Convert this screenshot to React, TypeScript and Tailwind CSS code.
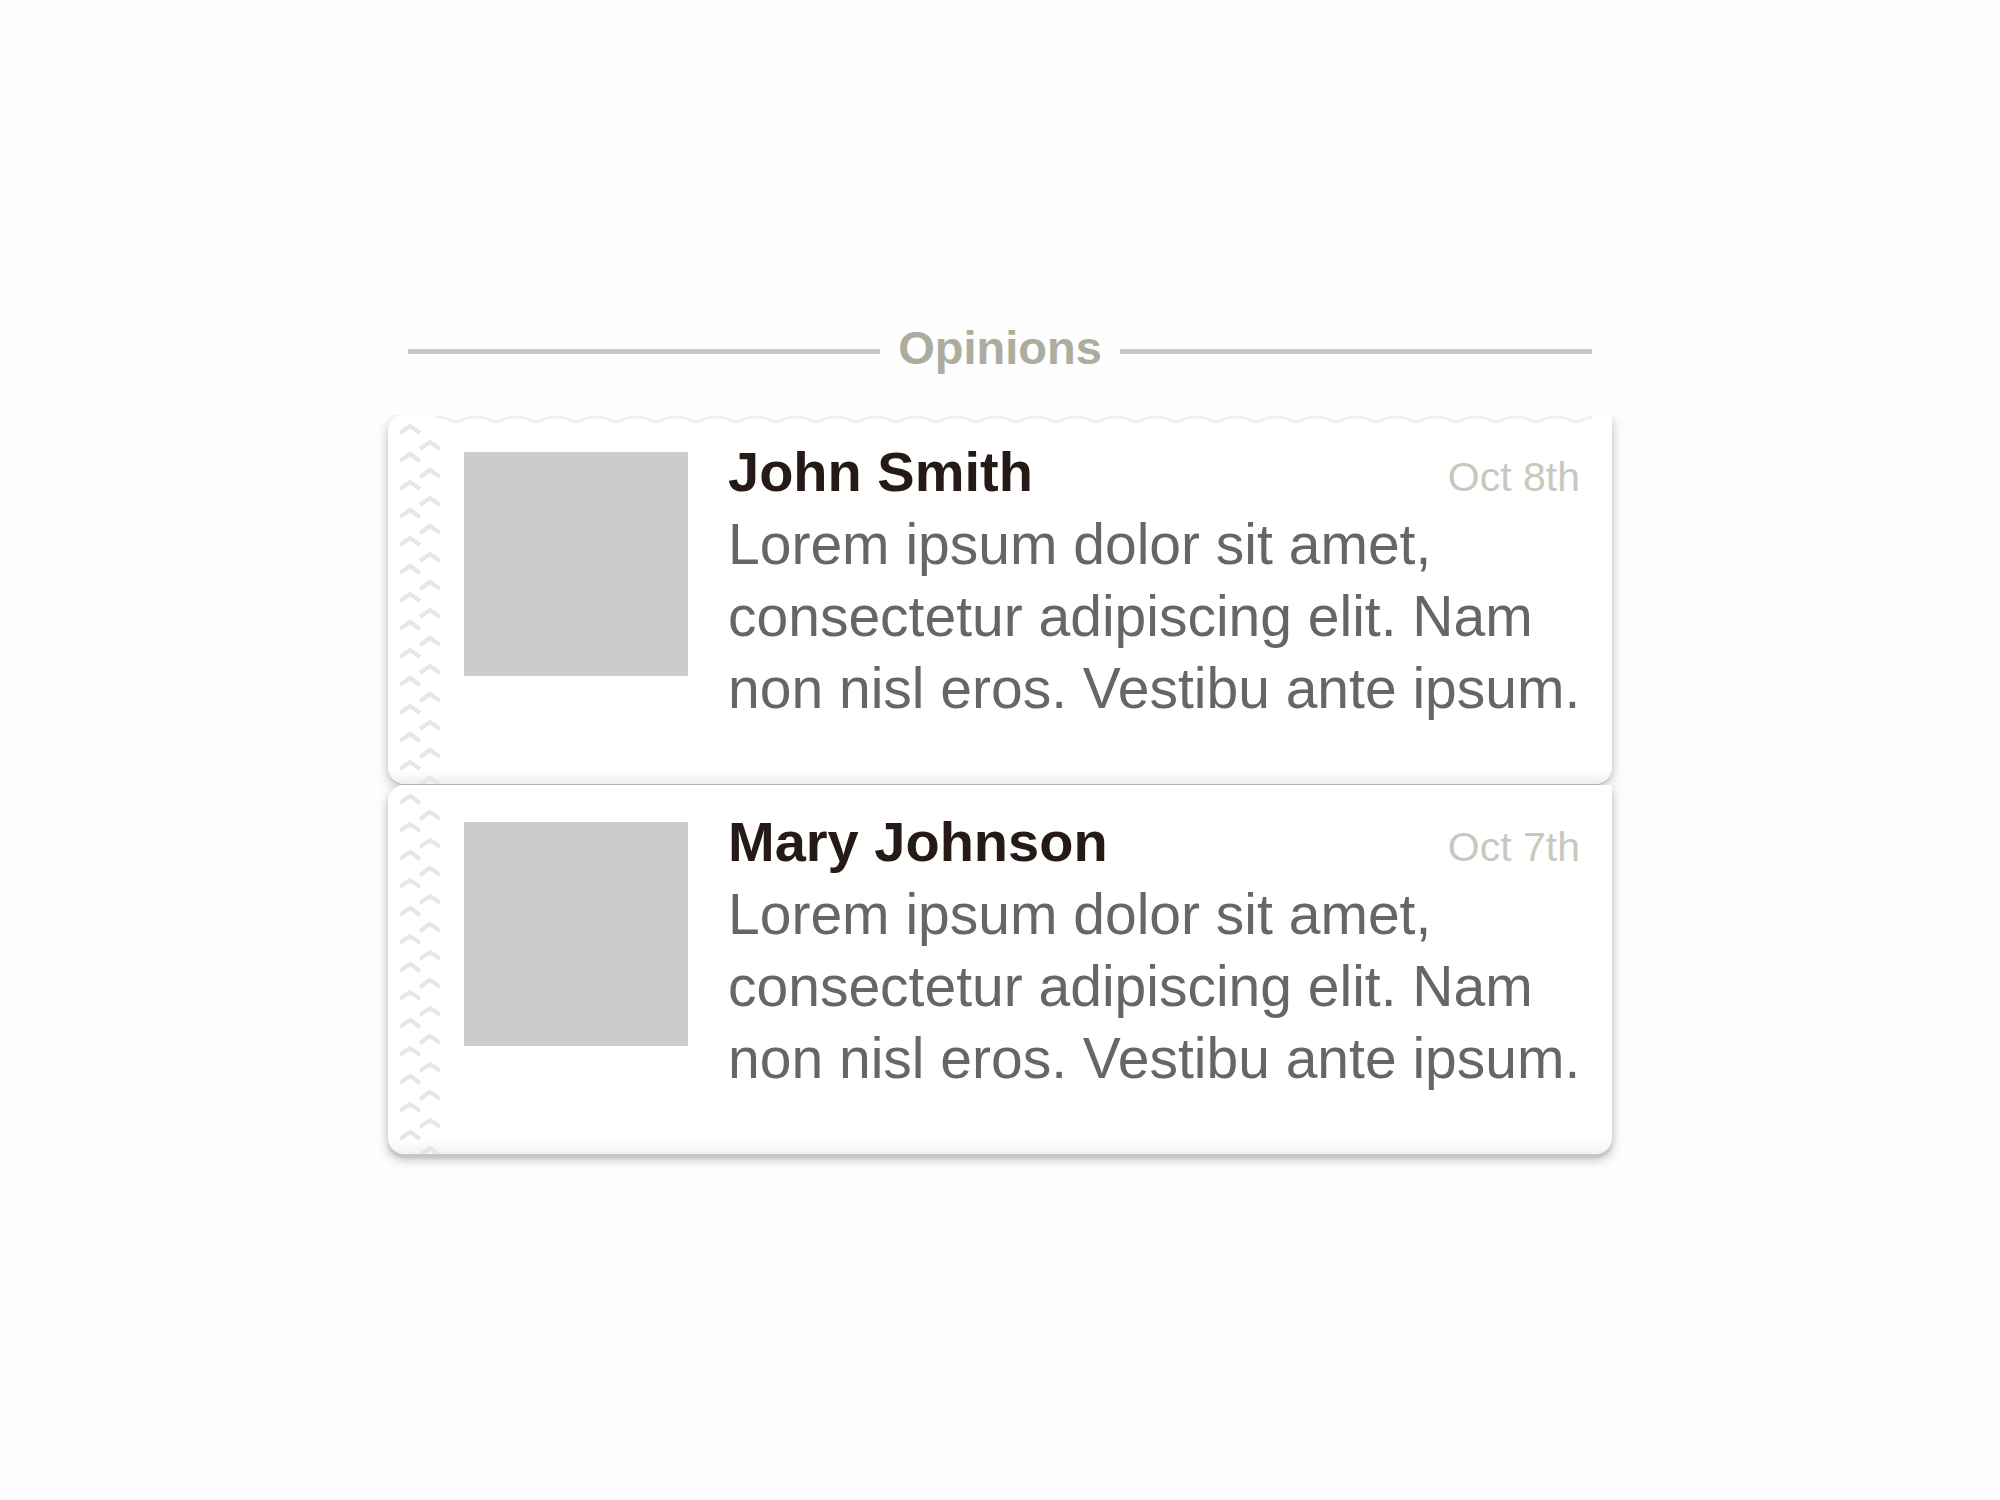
const CHEVRONS = Array.from({ length: 13 }, (_, i) => i * 28);

const WAVE = "M0 2" + Array.from({ length: 29 }, () => " q8 0 14 3 q6 4 12 0 q6 -3 14 -3").join("");

function Stitching() {
  return (
    <svg aria-hidden="true" className="h-full w-10 shrink-0" fill="none" stroke="#e6e6e6" strokeWidth="4">
      {CHEVRONS.map((y) => (
        <g key={y}>
          <path d={`M0 ${y + 18} L10 ${y + 11} L20 ${y + 18}`} />
          <path d={`M20 ${y + 34} L30 ${y + 27} L40 ${y + 34}`} />
        </g>
      ))}
    </svg>
  );
}

type Opinion = { name: string; date: string; text: string };

const OPINIONS: Opinion[] = [
  {
    name: "John Smith",
    date: "Oct 8th",
    text: "Lorem ipsum dolor sit amet, consectetur adipiscing elit. Nam non nisl eros. Vestibu ante ipsum.",
  },
  {
    name: "Mary Johnson",
    date: "Oct 7th",
    text: "Lorem ipsum dolor sit amet, consectetur adipiscing elit. Nam non nisl eros. Vestibu ante ipsum.",
  },
];

function Card({ opinion, first }: { opinion: Opinion; first: boolean }) {
  return (
    <li
      className={
        first
          ? "relative flex min-h-[369px] rounded-l-2xl rounded-br-2xl bg-linear-to-t from-[#eeeeee] to-white to-[14px] pl-3 shadow-[0_1px_0_#b0b0b0,0_4px_12px_#b8b8b8] [clip-path:inset(0_-16px_-16px_-16px)]"
          : "relative flex min-h-[369px] rounded-l-2xl rounded-br-2xl bg-linear-to-t from-[#f1f1f1] to-white to-[14px] pl-3 shadow-[0_4px_2px_#c6c6c6,0_5px_12px_#b8b8b8] [clip-path:inset(0_-16px_-20px_-16px)]"
      }
    >
      {first && (
        <svg aria-hidden="true" className="absolute top-0 right-5 left-12 h-3 w-[calc(100%-68px)]" fill="none" stroke="#f0f0f0" strokeWidth="3">
          <path d={WAVE} />
        </svg>
      )}
      <div className="flex w-10 shrink-0">
        <Stitching />
      </div>
      <div className="mt-[37px] ml-6 size-56 shrink-0 bg-[#cccccc]" />
      <article className="mt-[21px] ml-10 min-w-0 flex-1 leading-[72px]">
        <header className="flex items-baseline justify-between pr-8">
          <h2 className="text-[56px] font-bold text-[#261a17]">{opinion.name}</h2>
          <time className="text-[41px] leading-none text-[#c8c8bc]">{opinion.date}</time>
        </header>
        <p className="text-[57px] text-[#666666]">{opinion.text}</p>
      </article>
    </li>
  );
}

export default function App() {
  return (
    <main className="min-h-screen bg-[#fefefe] pt-[320px] font-['Liberation_Sans',Arial,sans-serif]">
      <section className="mx-auto max-w-[1224px]">
        <div className="flex items-center px-5">
          <div className="mt-1.5 h-[5px] flex-1 bg-[#c8c8bc]" />
          <h1 className="w-60 text-center text-[47px] leading-[56px] font-bold text-[#acac9f]">Opinions</h1>
          <div className="mt-1.5 h-[5px] flex-1 bg-[#c8c8bc]" />
        </div>
        <ul className="mt-[39px] flex flex-col gap-px">
          {OPINIONS.map((opinion, i) => (
            <Card key={opinion.name} opinion={opinion} first={i === 0} />
          ))}
        </ul>
      </section>
    </main>
  );
}
